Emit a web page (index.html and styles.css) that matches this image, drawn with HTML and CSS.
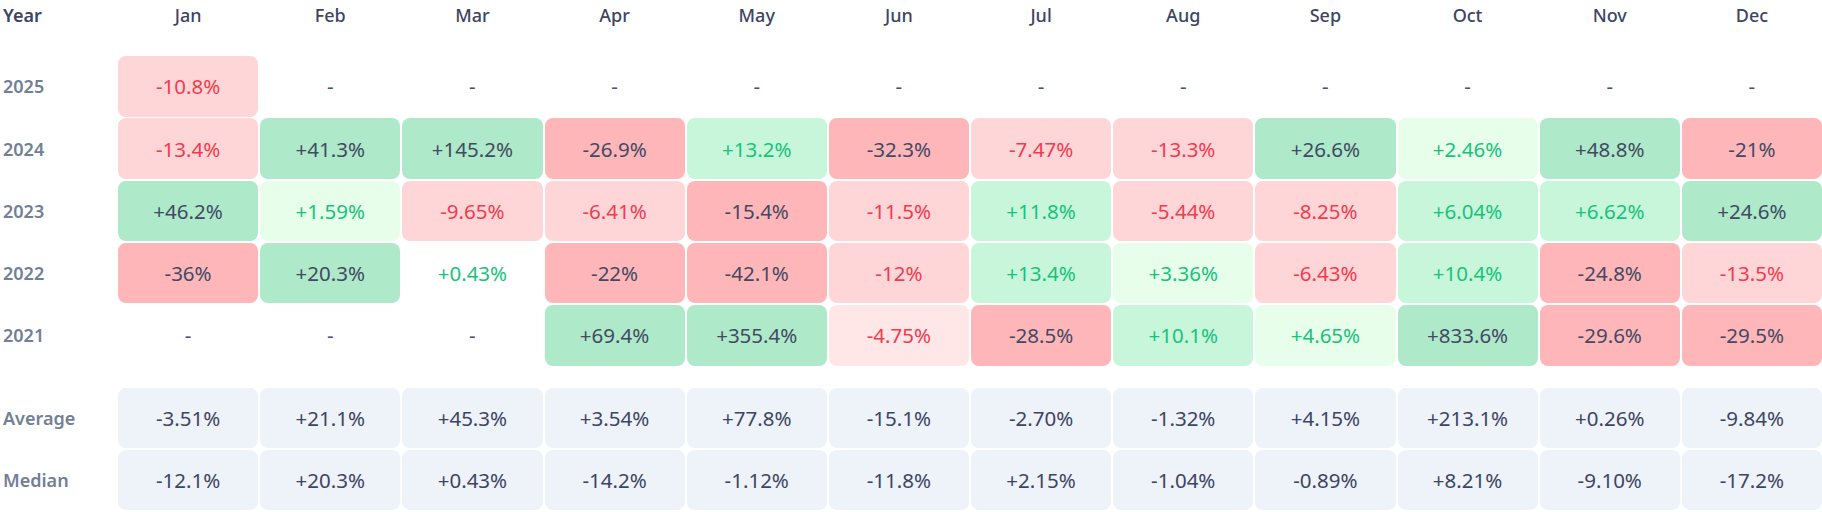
FILE: index.html
```html
<!DOCTYPE html>
<html>
<head>
<meta charset="utf-8">
<link rel="stylesheet" href="styles.css">
</head>
<body>
<div class="table">
  <div class="row head">
    <div class="label">Year</div>
    <div class="mh">Jan</div><div class="mh">Feb</div><div class="mh">Mar</div><div class="mh">Apr</div><div class="mh">May</div><div class="mh">Jun</div><div class="mh">Jul</div><div class="mh">Aug</div><div class="mh">Sep</div><div class="mh">Oct</div><div class="mh">Nov</div><div class="mh">Dec</div>
  </div>
  <div class="body">
    <div class="row">
      <div class="label yl">2025</div>
      <div class="c rl">-10.8%</div><div class="c e">-</div><div class="c e">-</div><div class="c e">-</div><div class="c e">-</div><div class="c e">-</div><div class="c e">-</div><div class="c e">-</div><div class="c e">-</div><div class="c e">-</div><div class="c e">-</div><div class="c e">-</div>
    </div>
    <div class="row">
      <div class="label yl">2024</div>
      <div class="c rl">-13.4%</div><div class="c gd">+41.3%</div><div class="c gd">+145.2%</div><div class="c rd">-26.9%</div><div class="c gm">+13.2%</div><div class="c rd">-32.3%</div><div class="c rl">-7.47%</div><div class="c rl">-13.3%</div><div class="c gd">+26.6%</div><div class="c gl">+2.46%</div><div class="c gd">+48.8%</div><div class="c rd">-21%</div>
    </div>
    <div class="row">
      <div class="label yl">2023</div>
      <div class="c gd">+46.2%</div><div class="c gl">+1.59%</div><div class="c rl">-9.65%</div><div class="c rl">-6.41%</div><div class="c rd">-15.4%</div><div class="c rl">-11.5%</div><div class="c gm">+11.8%</div><div class="c rl">-5.44%</div><div class="c rl">-8.25%</div><div class="c gm">+6.04%</div><div class="c gm">+6.62%</div><div class="c gd">+24.6%</div>
    </div>
    <div class="row">
      <div class="label yl">2022</div>
      <div class="c rd">-36%</div><div class="c gd">+20.3%</div><div class="c g0">+0.43%</div><div class="c rd">-22%</div><div class="c rd">-42.1%</div><div class="c rl">-12%</div><div class="c gm">+13.4%</div><div class="c gl">+3.36%</div><div class="c rl">-6.43%</div><div class="c gm">+10.4%</div><div class="c rd">-24.8%</div><div class="c rl">-13.5%</div>
    </div>
    <div class="row">
      <div class="label yl">2021</div>
      <div class="c e">-</div><div class="c e">-</div><div class="c e">-</div><div class="c gd">+69.4%</div><div class="c gd">+355.4%</div><div class="c rx">-4.75%</div><div class="c rd">-28.5%</div><div class="c gm">+10.1%</div><div class="c gl">+4.65%</div><div class="c gd">+833.6%</div><div class="c rd">-29.6%</div><div class="c rd">-29.5%</div>
    </div>
  </div>
  <div class="summary">
    <div class="row">
      <div class="label yl">Average</div>
      <div class="c s">-3.51%</div><div class="c s">+21.1%</div><div class="c s">+45.3%</div><div class="c s">+3.54%</div><div class="c s">+77.8%</div><div class="c s">-15.1%</div><div class="c s">-2.70%</div><div class="c s">-1.32%</div><div class="c s">+4.15%</div><div class="c s">+213.1%</div><div class="c s">+0.26%</div><div class="c s">-9.84%</div>
    </div>
    <div class="row">
      <div class="label yl">Median</div>
      <div class="c s">-12.1%</div><div class="c s">+20.3%</div><div class="c s">+0.43%</div><div class="c s">-14.2%</div><div class="c s">-1.12%</div><div class="c s">-11.8%</div><div class="c s">+2.15%</div><div class="c s">-1.04%</div><div class="c s">-0.89%</div><div class="c s">+8.21%</div><div class="c s">-9.10%</div><div class="c s">-17.2%</div>
    </div>
  </div>
</div>
</body>
</html>
```
FILE: styles.css
```css
html, body {
  margin: 0;
  padding: 0;
  background: #ffffff;
}
body {
  font-family: "Noto Sans", "Open Sans", sans-serif;
  color: #424a63;
}
.table {
  width: 1822px;
}
.row {
  display: grid;
  grid-template-columns: 116px repeat(12, 1fr);
  column-gap: 2px;
}
.head {
  height: 30px;
  margin-bottom: 26px;
  align-items: center;
}
.label {
  padding-left: 3px;
  font-size: 18px;
  font-weight: 600;
  display: flex;
  align-items: center;
}
.head .label {
  color: #3d4562;
}
.yl {
  color: #718096;
}
.mh {
  text-align: center;
  font-size: 18px;
  font-weight: 500;
  color: #3d4562;
}
.body {
  display: flex;
  flex-direction: column;
  gap: 1.8px;
}
.body .row {
  height: 60.5px;
}
.summary {
  margin-top: 22.6px;
  display: flex;
  flex-direction: column;
  gap: 1.5px;
}
.summary .row {
  height: 60px;
}
.c {
  display: flex;
  align-items: center;
  justify-content: center;
  font-size: 20.5px;
  border-radius: 8px;
  color: #424a63;
}
.e {
  color: #4a5168;
}
.rd { background: #feb6b9; color: #424a63; }
.rl { background: #fed6d8; color: #f23b4e; }
.rx { background: #ffe6e7; color: #f23b4e; }
.gd { background: #aee9c9; color: #424a63; }
.gm { background: #c7f6da; color: #17c37c; }
.gl { background: #e7feea; color: #17c37c; }
.g0 { color: #17c37c; }
.s { background: #eef2f9; color: #3d4562; }
```
